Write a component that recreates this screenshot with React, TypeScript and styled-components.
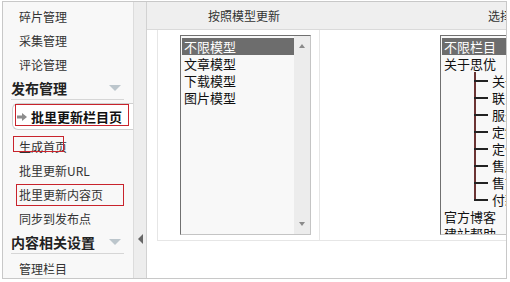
import React from "react";
import styled, { createGlobalStyle, css } from "styled-components";

const GlobalStyle = createGlobalStyle`
  html, body {
    margin: 0;
    padding: 0;
    background: #fff;
  }
  body {
    font-family: "Noto Sans CJK SC", "Liberation Sans", sans-serif;
    font-size: 12px;
    color: #333;
  }
`;

const Frame = styled.div`
  display: flex;
  box-sizing: border-box;
  width: 505px;
  height: 278px;
  margin: 1px 0 0 2px;
  border: 1px solid #c8c8c8;
  overflow: hidden;
`;

/* ---------- left menu ---------- */

const Sidebar = styled.nav`
  position: relative;
  flex: none;
  box-sizing: border-box;
  width: 131px;
  padding-top: 3px;
  background: #f8f8f8;
  border-right: 1px solid #dcdcdc;
  overflow: hidden;
`;

const NavItem = styled.div`
  height: 24px;
  line-height: 24px;
  padding-left: 16px;
  white-space: nowrap;
  color: #333;
`;

const GroupHead = styled.div`
  display: flex;
  align-items: center;
  justify-content: space-between;
  height: 22px;
  margin: 0 9px 3px 8px;
  border-bottom: 1px solid #d6d6d6;
  font-size: 14px;
  font-weight: bold;
  color: #222;
  white-space: nowrap;
`;

const HeadCaret = styled.span`
  width: 0;
  height: 0;
  margin-right: 3px;
  border-left: 6px solid transparent;
  border-right: 6px solid transparent;
  border-top: 6px solid #bcc6cc;
`;

const ActiveItem = styled.div`
  display: flex;
  align-items: center;
  gap: 4px;
  box-sizing: border-box;
  height: 27px;
  margin: 0 0 5px 9px;
  padding-left: 4px;
  background: #fff;
  border: 1px solid #cfcfcf;
  border-right: none;
  border-radius: 6px 0 0 6px;
  font-size: 13px;
  font-weight: bold;
  color: #111;
  white-space: nowrap;
`;

const Mark = styled.span<{ $x: number; $y: number; $w: number; $h: number }>`
  position: absolute;
  left: ${(p) => p.$x}px;
  top: ${(p) => p.$y}px;
  width: ${(p) => p.$w}px;
  height: ${(p) => p.$h}px;
  border: 1px solid #c8232c;
  pointer-events: none;
`;

const Collapse = styled.div`
  flex: none;
  box-sizing: border-box;
  width: 13px;
  padding-bottom: 34px;
  display: flex;
  flex-direction: column;
  justify-content: flex-end;
  align-items: center;
  background: #ededed;
  border-right: 1px solid #d2d2d2;
`;

const CollapseArrow = styled.span`
  width: 0;
  height: 0;
  border-top: 5px solid transparent;
  border-bottom: 5px solid transparent;
  border-right: 5px solid #666;
`;

/* ---------- main area ---------- */

const Main = styled.div`
  flex: 1;
  min-width: 0;
  overflow: hidden;
  background: #fff;
`;

const HeadRow = styled.div`
  display: flex;
  height: 27px;
  line-height: 27px;
  background: #efefef;
  border-bottom: 1px solid #dadada;
  white-space: nowrap;
  color: #333;
`;

const HeadCell = styled.div<{ $w: number }>`
  flex: none;
  width: ${(p) => p.$w}px;
  text-align: center;
`;

const Table = styled.div`
  display: flex;
  margin-left: 10px;
  border-left: 1px solid #e6e6e6;
  border-bottom: 1px solid #e6e6e6;
`;

const Cell = styled.div<{ $first?: boolean }>`
  padding: 5px 0 5px 120px;
  flex: 1;
  min-width: 0;
  overflow: hidden;
  ${(p) =>
    p.$first &&
    css`
      flex: none;
      box-sizing: border-box;
      width: 162px;
      padding-left: 22px;
      border-right: 1px solid #e6e6e6;
    `}
`;

const ListBox = styled.div<{ $w: number }>`
  display: flex;
  flex: none;
  box-sizing: border-box;
  width: ${(p) => p.$w}px;
  height: 200px;
  background: #f8f8f8;
  border: 1px solid;
  border-color: #707070 #c4c4c4 #c4c4c4 #707070;
`;

const Options = styled.div`
  flex: 1;
  min-width: 0;
  padding: 2px 0 0 1px;
  overflow: hidden;
`;

const Option = styled.div<{ $selected?: boolean }>`
  height: 17px;
  line-height: 17px;
  padding-left: 2px;
  font-size: 13px;
  color: #111;
  white-space: nowrap;
  ${(p) =>
    p.$selected &&
    css`
      background: #6d6d6d;
      color: #fff;
    `}
`;

const Branch = styled.span<{ $last?: boolean }>`
  position: relative;
  display: inline-block;
  width: 18px;
  height: 17px;
  margin-left: 30px;
  vertical-align: top;

  &::before {
    content: "";
    position: absolute;
    left: 0;
    top: 0;
    width: 2px;
    height: ${(p) => (p.$last ? "10px" : "17px")};
    background: #6b3434;
  }
  &::after {
    content: "";
    position: absolute;
    left: 0;
    top: 8px;
    width: 14px;
    height: 2px;
    background: #222;
  }
`;

const ScrollTrack = styled.div`
  flex: none;
  width: 16px;
  padding: 8px 0;
  display: flex;
  flex-direction: column;
  justify-content: space-between;
  align-items: center;
  background: #ececec;
`;

const ScrollArrow = styled.span<{ $down?: boolean }>`
  width: 0;
  height: 0;
  border-left: 3px solid transparent;
  border-right: 3px solid transparent;
  ${(p) =>
    p.$down
      ? css`
          border-top: 4px solid #8a8a8a;
        `
      : css`
          border-bottom: 4px solid #8a8a8a;
        `}
`;

const models = ["不限模型", "文章模型", "下载模型", "图片模型"];

const categories: { name: string; child?: boolean; last?: boolean }[] = [
  { name: "不限栏目" },
  { name: "关于思优" },
  { name: "关于我们", child: true },
  { name: "联系我们", child: true },
  { name: "服务项目", child: true },
  { name: "定制开发", child: true },
  { name: "定位服务", child: true },
  { name: "售后服务", child: true },
  { name: "售前咨询", child: true },
  { name: "付款方式", child: true, last: true },
  { name: "官方博客" },
  { name: "建站帮助" },
];

function ArrowIcon() {
  return (
    <svg width="10" height="8" viewBox="0 0 10 8">
      <path d="M0 2.5h5V0l5 4-5 4V5.5H0z" fill="#8c8c8c" />
    </svg>
  );
}

export default function App() {
  return (
    <>
      <GlobalStyle />
      <Frame>
        <Sidebar>
          <NavItem>碎片管理</NavItem>
          <NavItem>采集管理</NavItem>
          <NavItem>评论管理</NavItem>
          <GroupHead>
            发布管理
            <HeadCaret />
          </GroupHead>
          <ActiveItem>
            <ArrowIcon />
            批里更新栏目页
          </ActiveItem>
          <NavItem>生成首页</NavItem>
          <NavItem>批里更新URL</NavItem>
          <NavItem>批里更新内容页</NavItem>
          <NavItem>同步到发布点</NavItem>
          <GroupHead>
            内容相关设置
            <HeadCaret />
          </GroupHead>
          <NavItem>管理栏目</NavItem>

          <Mark $x={12} $y={102} $w={112} $h={20} />
          <Mark $x={10} $y={134} $w={49} $h={14} />
          <Mark $x={13} $y={182} $w={106} $h={20} />
        </Sidebar>

        <Collapse>
          <CollapseArrow />
        </Collapse>

        <Main>
          <HeadRow>
            <HeadCell $w={194}>按照模型更新</HeadCell>
            <HeadCell $w={366}>选择栏目更新</HeadCell>
          </HeadRow>
          <Table>
            <Cell $first>
              <ListBox $w={131}>
                <Options>
                  {models.map((m, i) => (
                    <Option key={m} $selected={i === 0}>
                      {m}
                    </Option>
                  ))}
                </Options>
                <ScrollTrack>
                  <ScrollArrow />
                  <ScrollArrow $down />
                </ScrollTrack>
              </ListBox>
            </Cell>
            <Cell>
              <ListBox $w={150}>
                <Options>
                  {categories.map((c, i) => (
                    <Option key={c.name + i} $selected={i === 0}>
                      {c.child && <Branch $last={c.last} />}
                      {c.name}
                    </Option>
                  ))}
                </Options>
              </ListBox>
            </Cell>
          </Table>
        </Main>
      </Frame>
    </>
  );
}
